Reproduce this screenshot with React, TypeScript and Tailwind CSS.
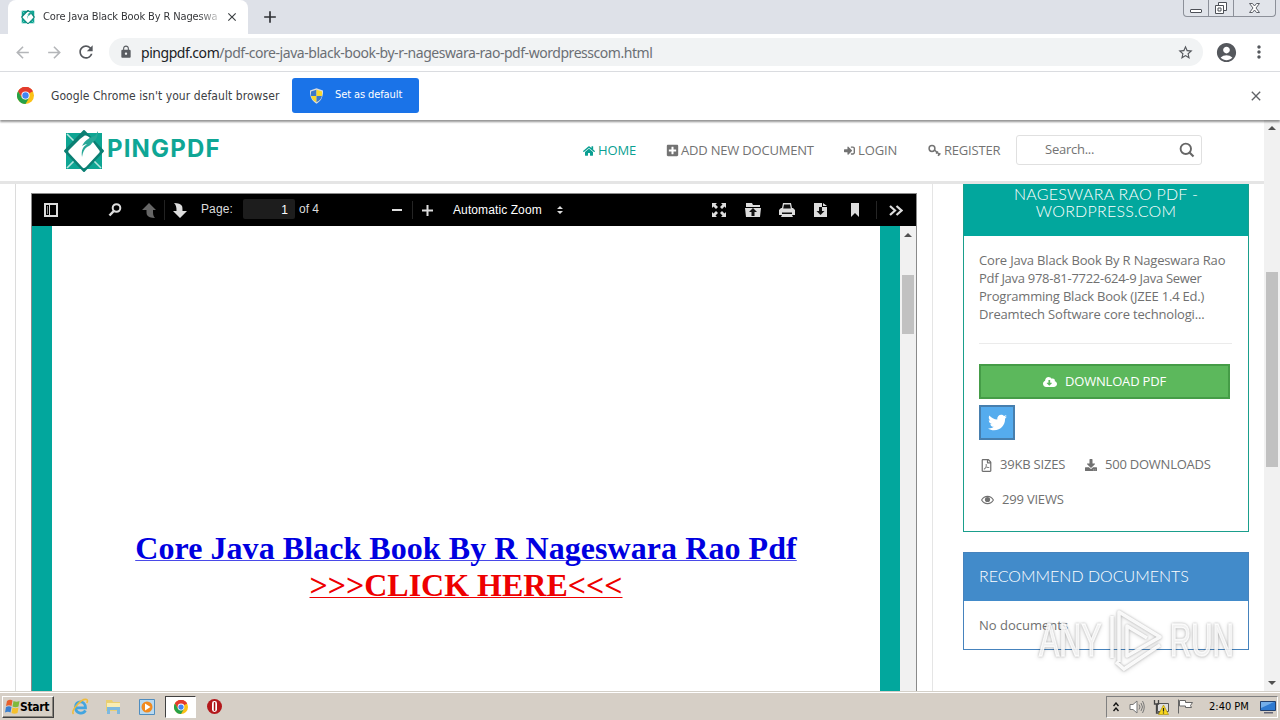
import React from "react";
import {
  FaHome,
  FaPlusSquare,
  FaSignInAlt,
  FaTwitter,
  FaRegFilePdf,
  FaDownload,
  FaCloudDownloadAlt,
} from "react-icons/fa";
import { MdLock, MdStarBorder, MdAccountCircle, MdMoreVert, MdRefresh, MdArrowBack, MdArrowForward, MdClose, MdAdd } from "react-icons/md";

function ChromeLogo({ className }: { className: string }) {
  return (
    <svg className={className} viewBox="0 0 24 24">
      <circle cx="12" cy="12" r="12" fill="#fbc116" />
      <path d="M12 12 1.6 6A12 12 0 0 1 22.4 6z" fill="#e33b2e" />
      <path d="M12 0a12 12 0 0 1 10.4 6H12L6.8 15 1.6 6A12 12 0 0 1 12 0z" fill="#e33b2e" />
      <path d="M1.6 6A12 12 0 0 0 12 24l5.2-9L12 17.5 6.8 15z" fill="#26a148" />
      <circle cx="12" cy="12" r="5.8" fill="#fff" />
      <circle cx="12" cy="12" r="4.5" fill="#4285f4" />
    </svg>
  );
}

function Shield() {
  return (
    <svg className="h-4 w-[15px]" viewBox="0 0 15 16">
      <path d="M7.5.3 14 2.5c.3 6-1.8 10.500-6.500 13.200C2.800 13 .7 8.500 1 2.500z" fill="#d9dde0" />
      <path d="M7.500 1.800V8H2.100C1.900 6.500 1.900 5 2 3.500z" fill="#3b78c9" />
      <path d="M7.500 1.800V8h5.400c.2-1.500.2-3 .1-4.500z" fill="#f8d82c" />
      <path d="M7.500 14.300V8H2.100c.6 2.700 2.400 4.900 5.400 6.300z" fill="#f8d82c" />
      <path d="M7.500 14.300V8h5.400c-.6 2.700-2.400 4.900-5.400 6.300z" fill="#3b78c9" />
    </svg>
  );
}

function Mark({ className }: { className: string }) {
  return (
    <svg className={className} viewBox="0 0 44 46">
      <path d="M4 5h36v36H4z" fill="#0ea593" />
      <path d="M5 6l8 8M39 40l-8-8M5 40l7-7" stroke="#b9e6df" strokeWidth="1.600" />
      <path d="M22 3 41 23 22 43 3 23z" fill="#0b7f73" stroke="#0b7f73" strokeWidth="2" strokeLinejoin="round" />
      <path d="M22 8c2-1 4 0 6 2l9 12c1 1 1 2 0 3L24 39c-1.500 1.500-3 1.500-4 0L7 25c-1-1-1-2 0-3L18 11z" fill="#fff" />
      <path d="M20 29c-1-7 1-10 5-13-2 0-3 1-5 2 3-6 8-9 13-10l3-5c0 6-2 9-5 11-2 2-3 4-6 5-3 2-4 5-5 10z" fill="#27a797" />
    </svg>
  );
}

function TabBar() {
  return (
    <div className="flex h-[34px] shrink-0 bg-[#dee1e8] pl-2">
      <div className="flex h-[34px] w-[240px] items-center rounded-t-lg bg-white pl-[12px]">
        <Mark className="h-4 w-4" />
        <span className="ml-[7px] w-[176px] overflow-hidden whitespace-nowrap bg-gradient-to-r from-[#303134] from-88% to-[#d8d8d8] bg-clip-text font-['DejaVu_Sans_Condensed','DejaVu_Sans',sans-serif] text-[11px] tracking-[-0.13px] text-transparent">
          Core Java Black Book By R Nageswa
        </span>
        <MdClose className="ml-[6px] size-[14px] stroke-[#3c4043] text-[#3c4043]" />
      </div>
      <MdAdd className="ml-[12px] mt-[7px] size-[20px] text-[#2f3135]" />
      <div className="ml-auto mr-[4px] flex h-[17px] w-[93px] rounded-b-[4px] border border-t-0 border-[#8c9099] bg-[#e1e4ea]">
        <div className="flex w-[25px] items-center justify-center border-r border-[#8c9099] pt-[5px]">
          <div className="h-[4px] w-[12px] rounded-[1px] border border-[#4d5057] bg-white" />
        </div>
        <svg className="h-[16px] w-[25px] border-r border-[#8c9099]" viewBox="0 0 24 16" fill="#fff" stroke="#4d5057">
          <path d="M9.500 2.500h8v8h-8z" />
          <path d="M6.500 5.500h8v8h-8zM9 8h3v3H9z" />
        </svg>
        <svg className="h-[16px] w-[41px]" viewBox="0 0 41 16" fill="#fff" stroke="#5d6068">
          <path d="M15.500 3.500h3l2 2.500 2-2.500h3l-3.500 4.500 3.500 4.500h-3l-2-2.500-2 2.500h-3L19 8z" />
        </svg>
      </div>
    </div>
  );
}

function AddressBar() {
  return (
    <div className="flex h-[38px] shrink-0 items-center border-b border-[#dadce0] bg-white pb-px pl-[13px]">
      <MdArrowBack className="size-[19px] text-[#b4b6b9]" />
      <MdArrowForward className="ml-[13px] size-[19px] text-[#b4b6b9]" />
      <MdRefresh className="ml-[12px] size-[20px] text-[#55585d]" />
      <div className="ml-[13px] flex h-[28px] w-[1094px] items-center rounded-full bg-[#f1f3f4] pl-[10px] pr-[9px]">
        <MdLock className="size-[14px] text-[#5a5d62]" />
        <span className="ml-[8px] whitespace-nowrap font-['Noto_Sans',sans-serif] text-[14px] tracking-[-0.455px] text-[#6b6f74]">
          <span className="text-[#202124]">pingpdf.com</span>/pdf-core-java-black-book-by-r-nageswara-rao-pdf-wordpresscom.html
        </span>
        <MdStarBorder className="ml-auto size-[17px] text-[#55585d]" />
      </div>
      <MdAccountCircle className="ml-[12px] size-[23px] text-[#55585d]" />
      <MdMoreVert className="ml-[11px] size-[20px] text-[#55585d]" />
    </div>
  );
}

function InfoBar() {
  return (
    <div className="z-10 flex h-[48px] shrink-0 items-center bg-white pb-px pl-[17px] font-['DejaVu_Sans_Condensed','DejaVu_Sans',sans-serif] shadow-[0_2px_2px_0_rgba(0,0,0,0.42)]">
      <ChromeLogo className="size-[17px]" />
      <span className="ml-[17px] w-[229px] whitespace-nowrap text-[12px] tracking-[0.07px] text-[#3c4043]">
        Google Chrome isn't your default browser
      </span>
      <div className="ml-[12px] flex h-[35px] w-[127px] items-center rounded-[3px] bg-[#1a73e8] pl-[17px] text-[11px] text-white">
        <Shield />
        <span className="ml-[11px] whitespace-nowrap tracking-[-0.1px]">Set as default</span>
      </div>
      <MdClose className="ml-auto mr-[16px] size-4 stroke-[#606367] text-[#606367]" />
    </div>
  );
}

function NavKey() {
  return (
    <svg className="size-[13px]" viewBox="0 0 13 13" fill="none" stroke="currentColor">
      <circle cx="4" cy="4.500" r="2.900" strokeWidth="1.500" />
      <path d="M6.500 6 12 11M8 9.500l2-2M10 11.800l2.300-2.500" strokeWidth="1.500" />
    </svg>
  );
}

function SiteHeader() {
  return (
    <div className="flex h-[64px] shrink-0 items-center border-b-[3px] border-[#e5e5e5] bg-white pl-[62px] font-['Open_Sans',sans-serif] text-[13px] text-[#737373]">
      <Mark className="h-[46px] w-[44px]" />
      <span className="-mt-[3px] ml-px w-[120px] whitespace-nowrap font-[Inter,sans-serif] text-[24px] font-bold leading-none tracking-[1.15px] text-[#0fa695]">
        PINGPDF
      </span>
      <div className="ml-[356px] flex w-[84px] items-center text-[#0a9f92]">
        <FaHome className="size-[12px]" />
        <span className="ml-[3px] tracking-[-0.1px]">HOME</span>
      </div>
      <div className="flex w-[177px] items-center whitespace-nowrap">
        <FaPlusSquare className="-ml-px size-[13px]" />
        <span className="ml-[2px] tracking-[-0.2px]">ADD NEW DOCUMENT</span>
      </div>
      <div className="flex w-[84px] items-center">
        <FaSignInAlt className="size-[11px]" />
        <span className="ml-[3px] tracking-[-0.1px]">LOGIN</span>
      </div>
      <div className="flex w-[88px] items-center">
        <NavKey />
        <span className="ml-[3px] tracking-[-0.2px]">REGISTER</span>
      </div>
      <div className="-mt-[2px] flex h-[30px] w-[186px] items-center rounded-[3px] border border-[#e0e0e0] pl-[28px] pr-[6px]">
        <span className="tracking-[-0.25px]">Search...</span>
        <svg className="ml-auto size-4" viewBox="0 0 16 16" fill="none" stroke="#666">
          <circle cx="6.800" cy="6.800" r="5.200" strokeWidth="1.900" />
          <path d="m10.500 10.500 4 4" strokeWidth="2.200" />
        </svg>
      </div>
    </div>
  );
}

function ViewerToolbar() {
  return (
    <div className="flex h-[32px] shrink-0 items-center bg-black pl-[12px] font-['Liberation_Sans',sans-serif] text-[12px] text-[#dcdcdc]">
      <svg className="h-[14px] w-[14px]" viewBox="0 0 14 14" fill="none" stroke="#ddd">
        <path d="M1 1h12v12H1z" strokeWidth="2" />
        <path d="M5.500 1v12" />
        <path d="M3.500 3v8" stroke="#888" />
      </svg>
      <svg className="ml-[50px] size-[14px]" viewBox="0 0 14 14" fill="none" stroke="#ddd">
        <circle cx="8.500" cy="5" r="3.800" strokeWidth="2" />
        <path d="M5.800 8 1.500 12.500" strokeWidth="2.500" />
      </svg>
      <svg className="ml-[19px] h-[15px] w-[16px]" viewBox="0 0 16 15" fill="#666">
        <path d="M8 0 15 7h-3c0 4 0 6 2 8-4 0-7-1-8-3-.5-1-.5-3-.5-5H1z" />
      </svg>
      <div className="ml-[7px] h-[20px] w-px bg-[#222]" />
      <svg className="ml-[7px] h-[15px] w-[16px]" viewBox="0 0 16 15" fill="#ddd">
        <path d="M8 15 1 8h3.500c0-4-.5-6-2.500-8 4 0 7 1 8 3 .5 1 .5 3 .5 5H15z" />
      </svg>
      <span className="-mt-[2px] ml-[13px] w-[42px] tracking-[0.1px]">Page:</span>
      <div className="-mt-[2px] h-[20px] w-[52px] rounded-[2px] bg-[#1d1d1d] pr-[7px] text-right leading-[22px] text-white">1</div>
      <span className="-mt-[2px] ml-[4px] w-[93px]">of 4</span>
      <div className="h-[2px] w-[10px] bg-[#ddd]" />
      <div className="ml-[10px] h-[18px] w-px bg-[#252525]" />
      <svg className="ml-[9px] size-[11px]" viewBox="0 0 11 11" stroke="#ddd" strokeWidth="2">
        <path d="M0 5.500h11M5.500 0v11" />
      </svg>
      <span className="ml-[20px] w-[104px] whitespace-nowrap tracking-[0.1px] text-white">Automatic Zoom</span>
      <svg className="h-[8px] w-[6px]" viewBox="0 0 6 8" fill="#ddd">
        <path d="M3 0l3 3H0zM3 8l3-3H0z" />
      </svg>
      <svg className="ml-[149px] size-[14px]" viewBox="0 0 14 14" fill="#ddd">
        <path d="M0 0h5L3.500 1.500 6 4 4 6 1.500 3.500 0 5zM14 0v5l-1.500-1.500L10 6 8 4l2.500-2.500L9 0zM0 14V9l1.500 1.500L4 8l2 2-2.500 2.500L5 14zM14 14H9l1.500-1.500L8 10l2-2 2.500 2.500L14 9z" />
      </svg>
      <svg className="ml-[19px] h-[14px] w-[16px]" viewBox="0 0 16 14">
        <path d="M1 0h6l1 2h7v2H1zM0 5h16l-1 9H1z" fill="#ddd" />
        <path d="m8 5 4 4H9.500v4h-3V9H4z" fill="#111" />
      </svg>
      <svg className="ml-[18px] h-[14px] w-[16px]" viewBox="0 0 16 14">
        <path d="M4 0h8l1 5h1l2 2v5h-3l1 2H2l1-2H0V7l2-2h1z" fill="#ddd" />
        <path d="M5 1.500h6l.8 4H4.200zM3 9.500h10v1.500H3z" fill="#111" />
      </svg>
      <svg className="ml-[19px] h-[14px] w-[13px]" viewBox="0 0 13 14">
        <path d="M0 0h8v4h5v10H0zM9 0l4 3H9z" fill="#ddd" />
        <path d="M5 4h3v4h2.500l-4 4-4-4H5z" fill="#111" />
      </svg>
      <svg className="ml-[24px] h-[14px] w-[8px]" viewBox="0 0 8 14" fill="#ddd">
        <path d="M0 0h8v14l-4-4-4 4z" />
      </svg>
      <div className="ml-[17px] h-[18px] w-px bg-[#252525]" />
      <svg className="ml-[12px] h-[11px] w-[14px]" viewBox="0 0 14 11" fill="none" stroke="#ddd" strokeWidth="2.200">
        <path d="m1 1 5 4.500L1 10M7.500 1l5 4.500-5 4.500" />
      </svg>
    </div>
  );
}

function Viewer() {
  return (
    <div className="mt-[9px] flex w-[886px] flex-col border border-b-0 border-[#8a8a8a]">
      <ViewerToolbar />
      <div className="flex flex-1">
        <div className="flex w-[868px] flex-col items-center border-x-[20px] border-[#02a79d] bg-white pt-[304px] text-center font-['Liberation_Serif',serif] text-[32px] font-bold leading-[37px]">
          <span className="whitespace-nowrap tracking-[0.06px] text-[#0000e0] underline decoration-[#4a4ae8] decoration-1 underline-offset-[1px] [text-decoration-skip-ink:none]">
            Core Java Black Book By R Nageswara Rao Pdf
          </span>
          <span className="whitespace-nowrap text-[#ee0000] underline decoration-1 underline-offset-[1px] [text-decoration-skip-ink:none]">&gt;&gt;&gt;CLICK HERE&lt;&lt;&lt;</span>
        </div>
        <div className="flex w-[16px] flex-col items-center bg-[#f1f1f1] pt-[7px]">
          <svg className="h-[4px] w-[8px]" viewBox="0 0 8 4" fill="#505050">
            <path d="M4 0l4 4H0z" />
          </svg>
          <div className="mt-[38px] h-[59px] w-[12px] bg-[#c1c1c1]" />
        </div>
      </div>
    </div>
  );
}

function Sidebar() {
  return (
    <div className="ml-[30px] w-[286px] font-['Open_Sans',sans-serif] text-[13px] text-[#707070]">
      <div className="h-[348px] border border-t-0 border-[#1a9e8c]">
        <div className="h-[52px] bg-[#02a79d] pt-px text-center font-[Lato,sans-serif] text-[16px] font-light leading-[17px] text-white">
          <div className="tracking-[0.25px]">NAGESWARA RAO PDF -</div>
          <div className="tracking-[0.25px]">WORDPRESS.COM</div>
        </div>
        <div className="px-[15px] pt-[15px]">
          <div className="whitespace-nowrap leading-[18px] tracking-[-0.17px]">
            <div>Core Java Black Book By R Nageswara Rao</div>
            <div className="tracking-[-0.28px]">Pdf Java 978-81-7722-624-9 Java Sewer</div>
            <div className="tracking-[-0.2px]">Programming Black Book (JZEE 1.4 Ed.)</div>
            <div className="tracking-[-0.17px]">Dreamtech Software core technologi...</div>
          </div>
          <div className="mt-[20px] h-px w-[253px] bg-[#ebebeb]" />
          <div className="mt-[20px] flex h-[35px] w-[251px] items-center justify-center border-2 border-[#459c47] bg-[#5cb85c] pt-px text-white">
            <FaCloudDownloadAlt className="size-[14px]" />
            <span className="ml-[8px] tracking-[-0.2px]">DOWNLOAD PDF</span>
          </div>
          <div className="mt-[6px] flex h-[35px] w-[36px] items-center justify-center border-2 border-[#477fae] bg-[#55acee] text-white">
            <FaTwitter className="size-[19px]" />
          </div>
          <div className="mt-[15px] flex h-[20px] items-center whitespace-nowrap pl-[2px]">
            <FaRegFilePdf className="h-[13px] w-[11px]" />
            <span className="ml-[8px] w-[85px] tracking-[-0.2px]">39KB SIZES</span>
            <FaDownload className="size-[12px]" />
            <span className="ml-[8px] tracking-[-0.23px]">500 DOWNLOADS</span>
          </div>
          <div className="mt-[15px] flex h-[20px] items-center pl-[2px]">
            <svg className="h-[10px] w-[13px]" viewBox="0 0 13 10" fill="none" stroke="currentColor">
              <path d="M.6 5C3.500.2 9.500.2 12.400 5 9.500 9.800 3.500 9.800.6 5z" strokeWidth="1.100" />
              <circle cx="6.500" cy="4.500" r="2.600" fill="currentColor" stroke="none" />
            </svg>
            <span className="ml-[8px] tracking-[-0.2px]">299 VIEWS</span>
          </div>
        </div>
      </div>
      <div className="mt-[20px] h-[98px] border border-[#4683bd]">
        <div className="h-[48px] bg-[#428bca] pl-[15px] font-[Lato,sans-serif] text-[16px] font-light leading-[46px] text-white">
          RECOMMEND DOCUMENTS
        </div>
        <div className="pl-[15px] leading-[48px]">No documents</div>
      </div>
    </div>
  );
}

function PageScrollbar() {
  return (
    <div className="flex w-[16px] flex-col items-center bg-[#f1f1f1] pt-[6px]">
      <svg className="h-[4px] w-[8px]" viewBox="0 0 8 4" fill="#505050">
        <path d="M4 0l4 4H0z" />
      </svg>
      <div className="mt-[142px] h-[195px] w-[12px] bg-[#c1c1c1]" />
      <svg className="mb-[7px] mt-auto h-[4px] w-[8px]" viewBox="0 0 8 4" fill="#505050">
        <path d="M4 4l4-4H0z" />
      </svg>
    </div>
  );
}

function Watermark() {
  return (
    <div className="absolute left-[1039px] top-[606px] flex h-[68px] items-center font-['Liberation_Sans_Narrow','Liberation_Sans',sans-serif] text-[46px] leading-none text-white/80 [filter:drop-shadow(0_0_1px_rgba(0,0,0,0.28))_drop-shadow(0_1px_2px_rgba(0,0,0,0.16))]">
      <span className="w-[68px]"><span className="inline-block origin-left scale-x-[0.66] [-webkit-text-stroke:1.5px_rgba(255,255,255,0.8)]">ANY</span></span>
      <svg className="h-[66px] w-[56px]" viewBox="0 0 56 66" fill="none" stroke="#fff" strokeOpacity="0.9" strokeWidth="3.500">
        <path d="M12 55V5l41 25L20 49V19l20 12" strokeLinejoin="round" />
        <path d="M5 9v42M9 55l8 7 36-24" />
      </svg>
      <span className="ml-[7px] w-[64px]"><span className="inline-block origin-left scale-x-[0.64] [-webkit-text-stroke:1.5px_rgba(255,255,255,0.8)]">RUN</span></span>
    </div>
  );
}

function Taskbar() {
  return (
    <div className="flex h-[28px] shrink-0 items-center bg-[#d6cfc6] pl-[2px] pt-px font-['DejaVu_Sans_Condensed','DejaVu_Sans',sans-serif] text-[11px] text-black shadow-[inset_0_1px_0_#fff,0_-1px_0_#d4d0c8]">
      <div className="flex h-[22px] w-[52px] items-center border border-b-[#404040] border-l-white border-r-[#404040] border-t-white pl-[2px] shadow-[inset_-1px_-1px_0_#8a867e]">
        <svg className="h-[15px] w-[15px] shrink-0" viewBox="0 0 15 15">
          <path d="M2 2c2-1.500 4-1.500 5.500-.5L6.500 7C5 6 3 6 1 7z" fill="#e8602c" />
          <path d="M8.500 2c2 1 4 1 6 0l-1 5.500c-2 1-4 1-6 0z" fill="#7fb93c" />
          <path d="M1 8c2-1 4-1 5.500 0l-1 5.500C4 12.500 2 12.500 0 13.500z" fill="#3a7fd0" />
          <path d="M7.500 8.500c2 1 4 1 6 0l-1 5.500c-2 1-4 1-6 0z" fill="#f5c02d" />
        </svg>
        <span className="text-[12px] font-bold tracking-[-0.35px]">Start</span>
      </div>
      <svg className="ml-[17px] size-[18px]" viewBox="0 0 18 18" fill="none">
        <path d="M14.500 12.500c-3 4.500-10 3-10-3.500 0-7 10-7 10 .8H6" stroke="#43a5df" strokeWidth="2.800" />
        <path d="M2.500 16c-3-3 8-16 13-14.500 1.500.5 1 2 .3 3.500" stroke="#efbc3c" strokeWidth="1.600" />
      </svg>
      <svg className="ml-[16px] h-[17px] w-[17px]" viewBox="0 0 17 17">
        <path d="M1 2h6l1 2h7v9H1z" fill="#e9cf72" />
        <path d="M2 5h13v6H2z" fill="#f8edb3" />
        <path d="M2 9h13v7h-3v-4H5v4H2z" fill="#7db9df" />
      </svg>
      <svg className="ml-[17px] size-[16px]" viewBox="0 0 16 16">
        <path d="M.5.500h15v15H.5z" fill="#b9d9f0" stroke="#4f8dbf" />
        <circle cx="8" cy="8" r="5.500" fill="#f18a1f" />
        <path d="M6 4.500 11.500 8 6 11.500z" fill="#fff" />
      </svg>
      <div className="ml-[10px] flex h-[22px] w-[31px] items-center justify-center border border-b-white border-l-[#404040] border-r-white border-t-[#404040] bg-white">
        <ChromeLogo className="size-[14px]" />
      </div>
      <svg className="ml-[11px] size-[15px]" viewBox="0 0 15 15">
        <circle cx="7.500" cy="7.500" r="7.500" fill="#b3181b" />
        <rect x="5" y="2" width="5" height="11" rx="2.400" fill="#fff" />
        <rect x="6.800" y="3" width="1.500" height="9" rx=".7" fill="#a11" />
      </svg>
      <div className="ml-auto mr-[2px] flex h-[22px] w-[172px] items-center border border-b-white border-l-[#808080] border-r-white border-t-[#808080] pl-[6px]">
        <svg className="h-[10px] w-[6px]" viewBox="0 0 6 10" fill="none" stroke="#111" strokeWidth="1.400">
          <path d="m.5 4 2.500-3 2.500 3M.5 9 3 6l2.500 3" />
        </svg>
        <svg className="ml-[10px] h-[14px] w-[16px]" viewBox="0 0 16 14" fill="none" stroke="#777">
          <path d="M1 4.500h3L8 1v12L4 9.500H1z" fill="#fff" />
          <path d="M10 4.500q2 2.500 0 5M12 3q3 4 0 8M13.500 1q3.500 6 0 12" />
        </svg>
        <svg className="ml-[8px] size-[16px]" viewBox="0 0 16 16">
          <path d="M4.500 4.500h11v8h-11z" fill="#ddd" stroke="#555" />
          <path d="M1.500 1v4h4V1M3.500 5v9h4" fill="none" stroke="#444" strokeWidth="1.300" />
          <path d="M10.500 6 15.500 15.500h-10z" fill="#f9d71c" stroke="#a48a00" strokeWidth=".6" />
          <path d="M10.500 9v3.500M10.500 13.500v1" stroke="#222" strokeWidth="1.200" />
        </svg>
        <svg className="ml-[8px] h-[15px] w-[17px]" viewBox="0 0 17 15" fill="#fff" stroke="#666">
          <path d="M1.500.500v14M2.500 1.500h6v2h7l-2 3 1 2h-6v-1.500h-6z" />
        </svg>
        <span className="ml-[15px] w-[41px] whitespace-nowrap pt-[2px] tracking-[0px]">2:40 PM</span>
        <svg className="ml-[10px] h-[14px] w-[16px]" viewBox="0 0 16 14">
          <path d="M.5 1.500h15v9H.5z" fill="#2f7ad1" stroke="#23406e" />
          <path d="M1 2h13L1 8z" fill="#74aeea" />
          <path d="M4 12h9v1.500H4z" fill="#667" />
        </svg>
      </div>
    </div>
  );
}

export default function App() {
  return (
    <div className="relative flex h-[720px] w-[1280px] flex-col overflow-hidden bg-white">
      <TabBar />
      <AddressBar />
      <InfoBar />
      <div className="flex h-[572px] shrink-0">
        <div className="flex w-[1264px] flex-col bg-white">
          <SiteHeader />
          <div className="flex min-h-0 flex-1">
            <div className="ml-[15px] flex w-[918px] border-r border-[#e5e5e5]">
              <div className="mr-[15px] w-px bg-[#dcdcdc]" />
              <Viewer />
            </div>
            <Sidebar />
          </div>
        </div>
        <PageScrollbar />
      </div>
      <Taskbar />
      <Watermark />
    </div>
  );
}
